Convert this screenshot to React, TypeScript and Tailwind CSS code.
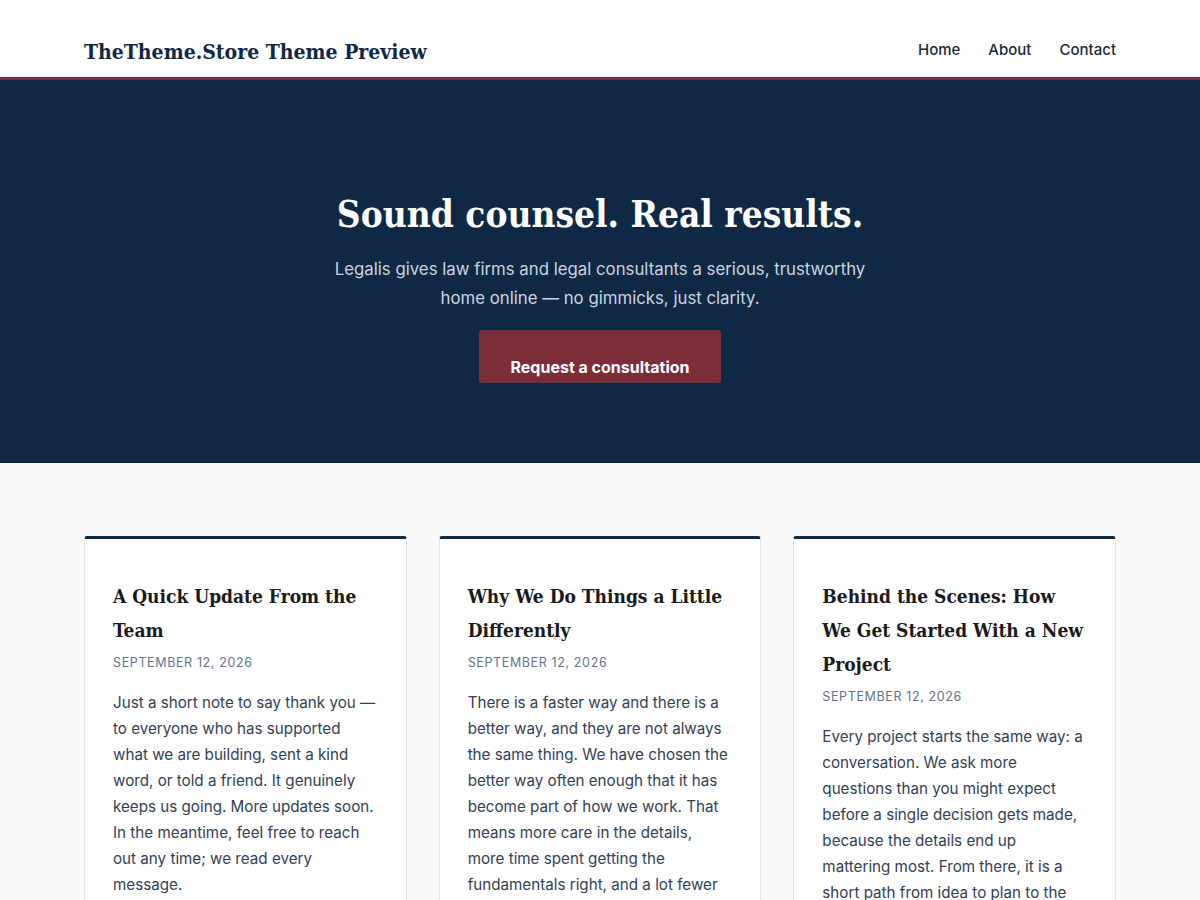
import React from "react";

const serif = {
  fontFamily: '"DejaVu Serif Condensed", "DejaVu Serif", "Liberation Serif", serif',
  fontStretch: "condensed",
} as React.CSSProperties;

const posts = [
  {
    title: "A Quick Update From the Team",
    body: "Just a short note to say thank you — to everyone who has supported what we are building, sent a kind word, or told a friend. It genuinely keeps us going. More updates soon. In the meantime, feel free to reach out any time; we read every message.",
  },
  {
    title: "Why We Do Things a Little Differently",
    body: "There is a faster way and there is a better way, and they are not always the same thing. We have chosen the better way often enough that it has become part of how we work. That means more care in the details, more time spent getting the fundamentals right, and a lot fewer shortcuts along the way.",
  },
  {
    title: "Behind the Scenes: How We Get Started With a New Project",
    body: "Every project starts the same way: a conversation. We ask more questions than you might expect before a single decision gets made, because the details end up mattering most. From there, it is a short path from idea to plan to the finished result.",
  },
];

export default function App() {
  return (
    <div className="min-h-screen bg-[#f8fafc]" style={{ fontFamily: 'Inter, "Noto Sans", sans-serif' }}>
      <header className="bg-white border-b-[3px] border-[#7b2d3a]">
        <div className="mx-auto w-[1032px] h-[77px] pt-[24px] flex items-center justify-between">
          <div className="text-[21px] font-bold text-[#0f2944] pt-[3px]" style={serif}>
            TheTheme.Store Theme Preview
          </div>
          <nav className="flex items-center gap-[28px] text-[15px] font-medium text-[#1e293b]">
            <a>Home</a>
            <a>About</a>
            <a>Contact</a>
          </nav>
        </div>
      </header>

      <section className="bg-[#0f2944] h-[383px] flex flex-col items-center pt-[108px]">
        <h1 className="text-[36.7px] leading-[54px] font-bold text-white" style={serif}>
          Sound counsel. Real results.
        </h1>
        <p className="mt-[13px] w-[560px] text-center text-[16.8px] leading-[29px] text-[#cbd5e1]">
          Legalis gives law firms and legal consultants a serious, trustworthy home online — no gimmicks, just clarity.
        </p>
        <button className="mt-[17px] w-[242px] h-[53px] rounded-[3px] bg-[#7b2d3a] text-white text-[16px] font-bold pt-[21px]">
          Request a consultation
        </button>
      </section>

      <main className="mx-auto w-[1032px] pt-[73px] pb-16 grid grid-cols-3 gap-[32px]">
        {posts.map((p) => (
          <article
            key={p.title}
            className="bg-white border border-[#e2e8f0] border-t-[3px] border-t-[#0f2944] rounded-[3px] px-[28px] pt-[40px] pb-[32px]"
          >
            <h2 className="text-[19px] leading-[34px] font-bold text-[#1a1a1a]" style={serif}>
              {p.title}
            </h2>
            <div className="mt-[6px] text-[12.5px] leading-[20px] tracking-[0.05em] uppercase text-[#64748b]">
              September 12, 2026
            </div>
            <p className="mt-[17px] text-[15.2px] leading-[26px] text-[#334155]">{p.body}</p>
          </article>
        ))}
      </main>
    </div>
  );
}
